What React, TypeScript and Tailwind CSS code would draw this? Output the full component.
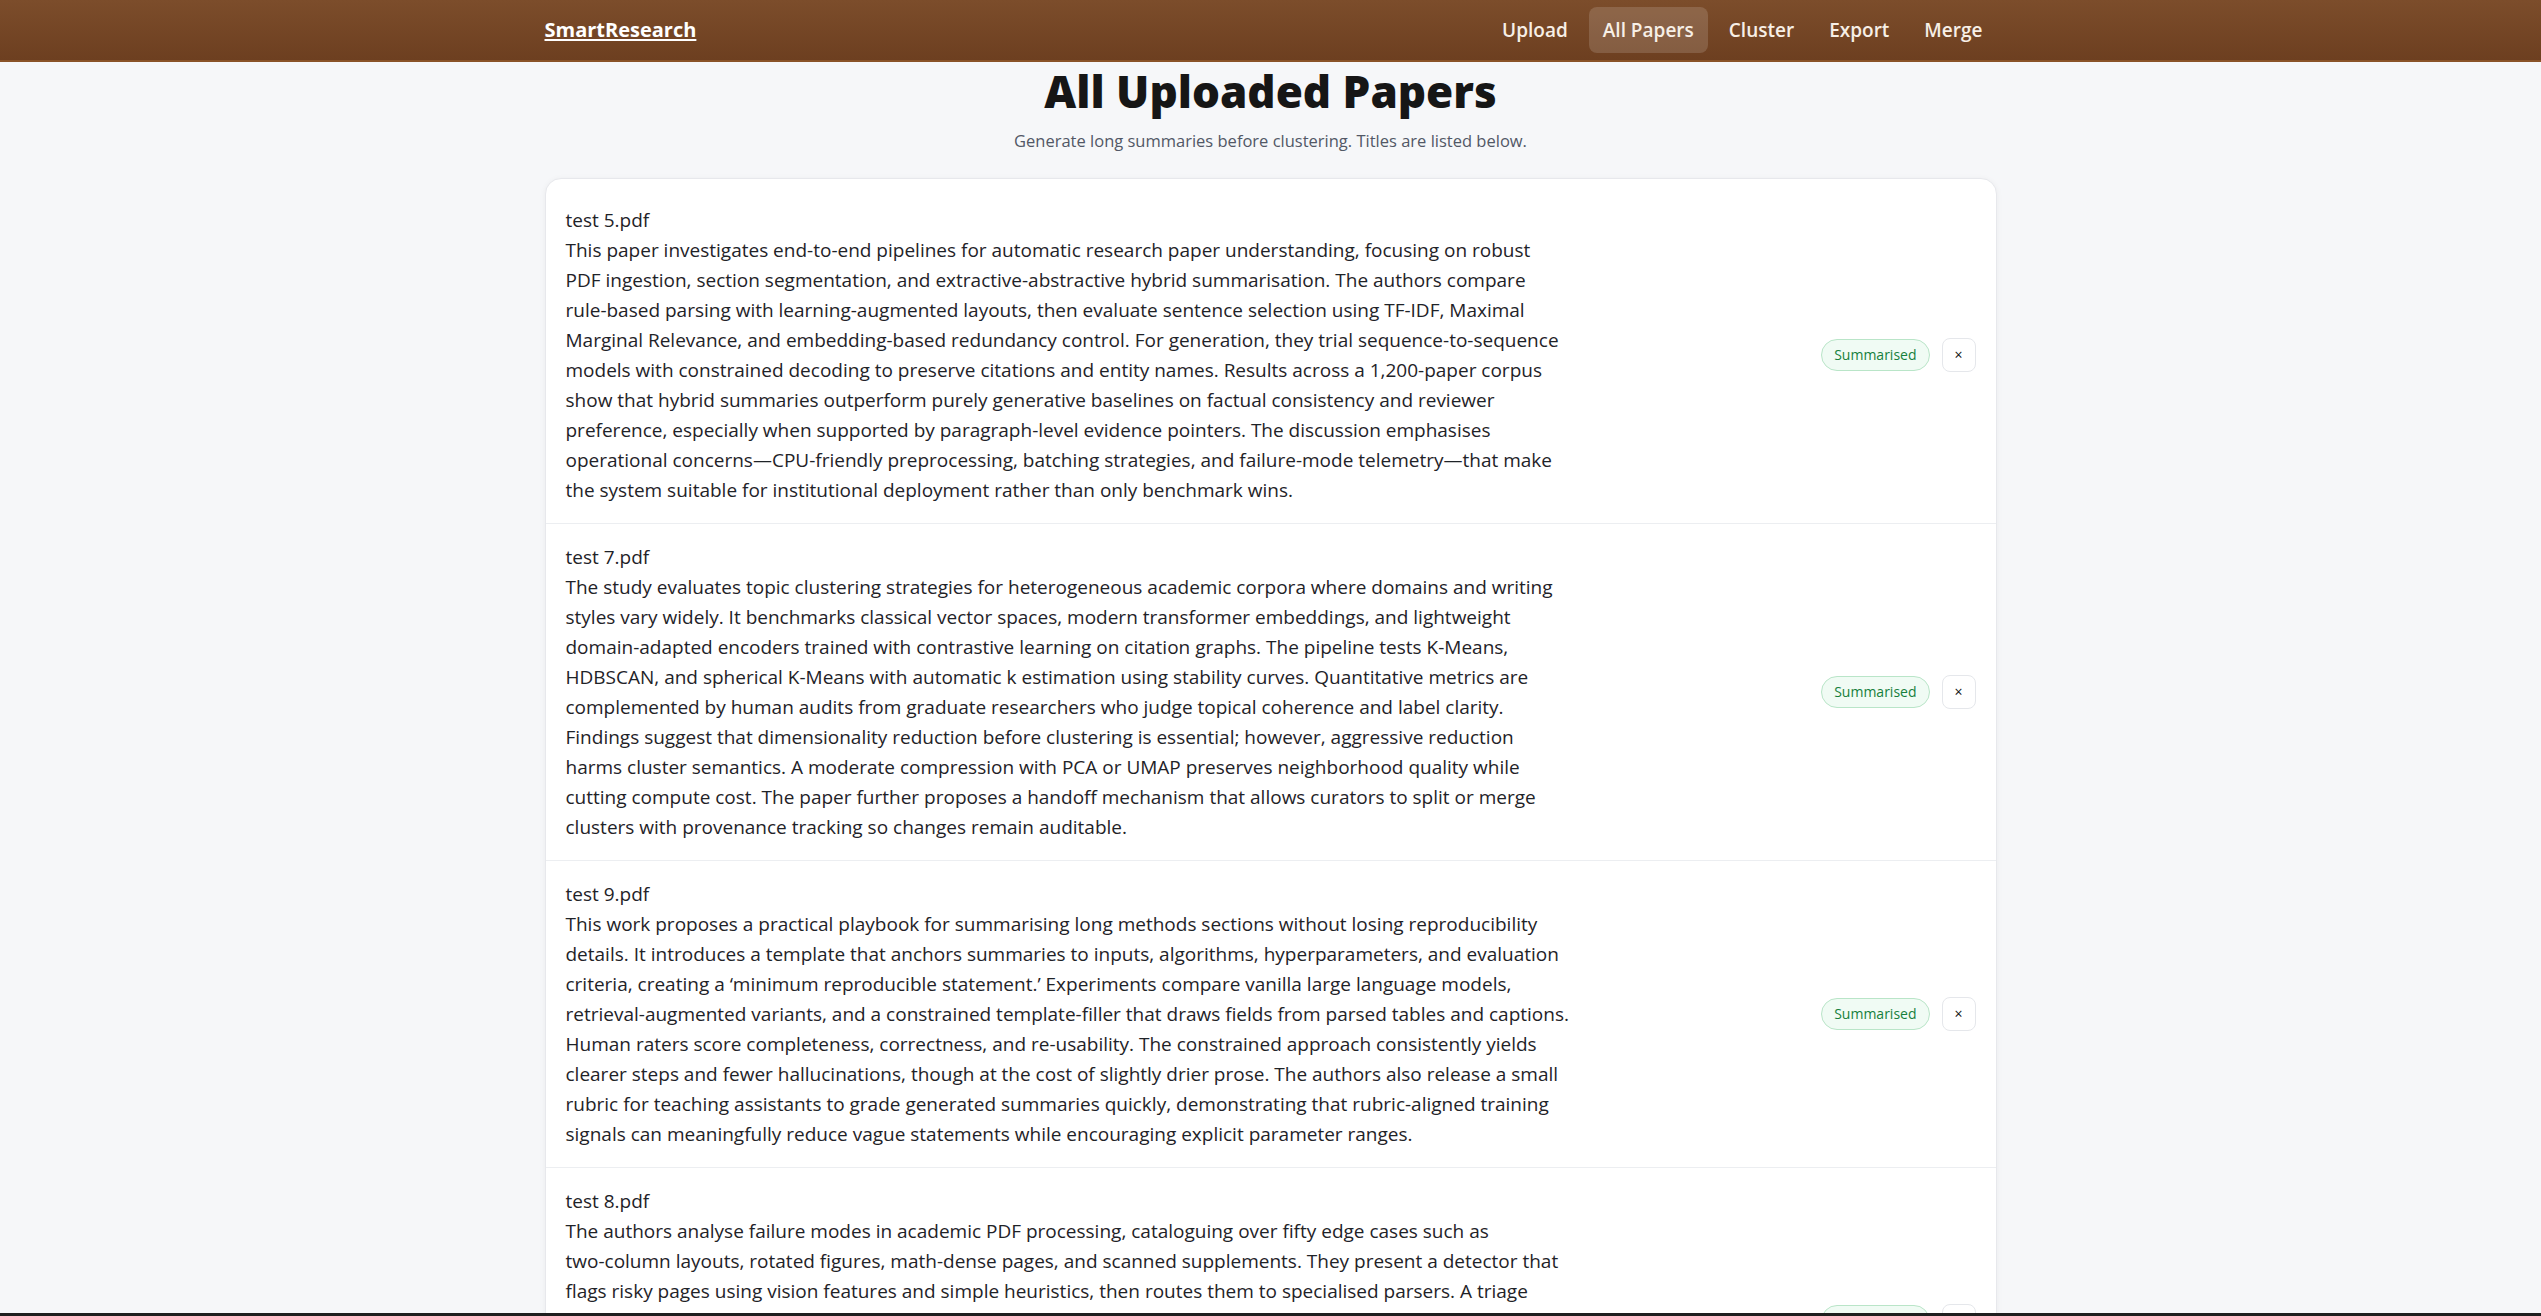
const links = ["Upload", "All Papers", "Cluster", "Export", "Merge"];

// summaries are kept line by line so the wrap matches the original layout
const papers = [
  {
    name: "test 5.pdf",
    lines: [
      "This paper investigates end-to-end pipelines for automatic research paper understanding, focusing on robust",
      "PDF ingestion, section segmentation, and extractive-abstractive hybrid summarisation. The authors compare",
      "rule-based parsing with learning-augmented layouts, then evaluate sentence selection using TF-IDF, Maximal",
      "Marginal Relevance, and embedding-based redundancy control. For generation, they trial sequence-to-sequence",
      "models with constrained decoding to preserve citations and entity names. Results across a 1,200-paper corpus",
      "show that hybrid summaries outperform purely generative baselines on factual consistency and reviewer",
      "preference, especially when supported by paragraph-level evidence pointers. The discussion emphasises",
      "operational concerns—CPU-friendly preprocessing, batching strategies, and failure-mode telemetry—that make",
      "the system suitable for institutional deployment rather than only benchmark wins.",
    ],
  },
  {
    name: "test 7.pdf",
    lines: [
      "The study evaluates topic clustering strategies for heterogeneous academic corpora where domains and writing",
      "styles vary widely. It benchmarks classical vector spaces, modern transformer embeddings, and lightweight",
      "domain-adapted encoders trained with contrastive learning on citation graphs. The pipeline tests K-Means,",
      "HDBSCAN, and spherical K-Means with automatic k estimation using stability curves. Quantitative metrics are",
      "complemented by human audits from graduate researchers who judge topical coherence and label clarity.",
      "Findings suggest that dimensionality reduction before clustering is essential; however, aggressive reduction",
      "harms cluster semantics. A moderate compression with PCA or UMAP preserves neighborhood quality while",
      "cutting compute cost. The paper further proposes a handoff mechanism that allows curators to split or merge",
      "clusters with provenance tracking so changes remain auditable.",
    ],
  },
  {
    name: "test 9.pdf",
    lines: [
      "This work proposes a practical playbook for summarising long methods sections without losing reproducibility",
      "details. It introduces a template that anchors summaries to inputs, algorithms, hyperparameters, and evaluation",
      "criteria, creating a ‘minimum reproducible statement.’ Experiments compare vanilla large language models,",
      "retrieval-augmented variants, and a constrained template-filler that draws fields from parsed tables and captions.",
      "Human raters score completeness, correctness, and re-usability. The constrained approach consistently yields",
      "clearer steps and fewer hallucinations, though at the cost of slightly drier prose. The authors also release a small",
      "rubric for teaching assistants to grade generated summaries quickly, demonstrating that rubric-aligned training",
      "signals can meaningfully reduce vague statements while encouraging explicit parameter ranges.",
    ],
  },
  {
    name: "test 8.pdf",
    lines: [
      "The authors analyse failure modes in academic PDF processing, cataloguing over fifty edge cases such as",
      "two-column layouts, rotated figures, math-dense pages, and scanned supplements. They present a detector that",
      "flags risky pages using vision features and simple heuristics, then routes them to specialised parsers. A triage",
      "policy sequences partial recovery, re-running only the failing pages, and logs every fallback so curators",
      "can audit the output. Evaluations on institutional repositories show fewer broken sections, cleaner reference",
      "lists, and more reliable figure captions, with throughput remaining within a modest CPU budget. The paper",
      "closes with guidance on monitoring drift as new publisher templates appear, recommending lightweight",
      "regression suites built from previously failed documents.",
    ],
  },
];

export default function App() {
  return (
    <div className="min-h-screen bg-[#f6f7f9] font-['Open_Sans',sans-serif] text-[#1f2328]">
      {/* Top navigation */}
      <header className="h-[62px] border-b-2 border-[#8a5328] bg-gradient-to-b from-[#7c4d2b] to-[#6d3f20]">
        <div className="mx-auto flex h-full w-[1452px] items-center justify-between">
          <a href="#" className="text-[20px] font-bold text-white underline underline-offset-2">
            SmartResearch
          </a>
          <nav className="flex items-center gap-[7px]">
            {links.map((l) => (
              <a
                key={l}
                href="#"
                className={
                  l === "All Papers"
                    ? "rounded-lg bg-white/15 px-[14px] py-[9px] text-[19px] font-semibold leading-[28px] text-[#f7efe6]"
                    : "rounded-lg px-[14px] py-[9px] text-[19px] font-semibold leading-[28px] text-[#f7efe6]"
                }
              >
                {l}
              </a>
            ))}
          </nav>
        </div>
      </header>

      <main className="mx-auto w-[1452px] pb-10">
        <h1 className="mt-[2px] text-center text-[44px] font-extrabold leading-[54px] text-[#161616]">
          All Uploaded Papers
        </h1>
        <p className="mt-[11px] text-center text-[16.5px] leading-6 text-[#525866]">
          Generate long summaries before clustering. Titles are listed below.
        </p>

        {/* Paper list */}
        <section className="mt-[25px] rounded-2xl border border-[#e7e8ec] bg-white pt-2 shadow-[0_1px_6px_rgba(15,23,42,0.05)]">
          {papers.map((p, i) => (
            <div
              key={p.name}
              className={
                i === 0
                  ? "flex items-center justify-between px-5 py-[18px]"
                  : "flex items-center justify-between border-t border-[#eceef1] px-5 py-[18px]"
              }
            >
              <div className="w-[1000px] text-[19px] leading-[30px]">
                <div>{p.name}</div>
                <p>
                  {p.lines.map((line) => (
                    <span key={line} className="block whitespace-nowrap">
                      {line}
                    </span>
                  ))}
                </p>
              </div>
              <div className="flex items-center gap-3">
                <span className="rounded-full border border-[#b9e5c8] bg-[#f0fbf4] px-3 py-[5px] text-sm leading-5 text-[#16803c]">
                  Summarised
                </span>
                <button className="flex h-[34px] w-[34px] items-center justify-center rounded-lg border border-[#e5e7eb] bg-white text-sm text-[#111]">
                  ×
                </button>
              </div>
            </div>
          ))}
        </section>
      </main>

      <div className="fixed inset-x-0 bottom-0 h-[3px] bg-[#1f1f1f]" />
    </div>
  );
}
